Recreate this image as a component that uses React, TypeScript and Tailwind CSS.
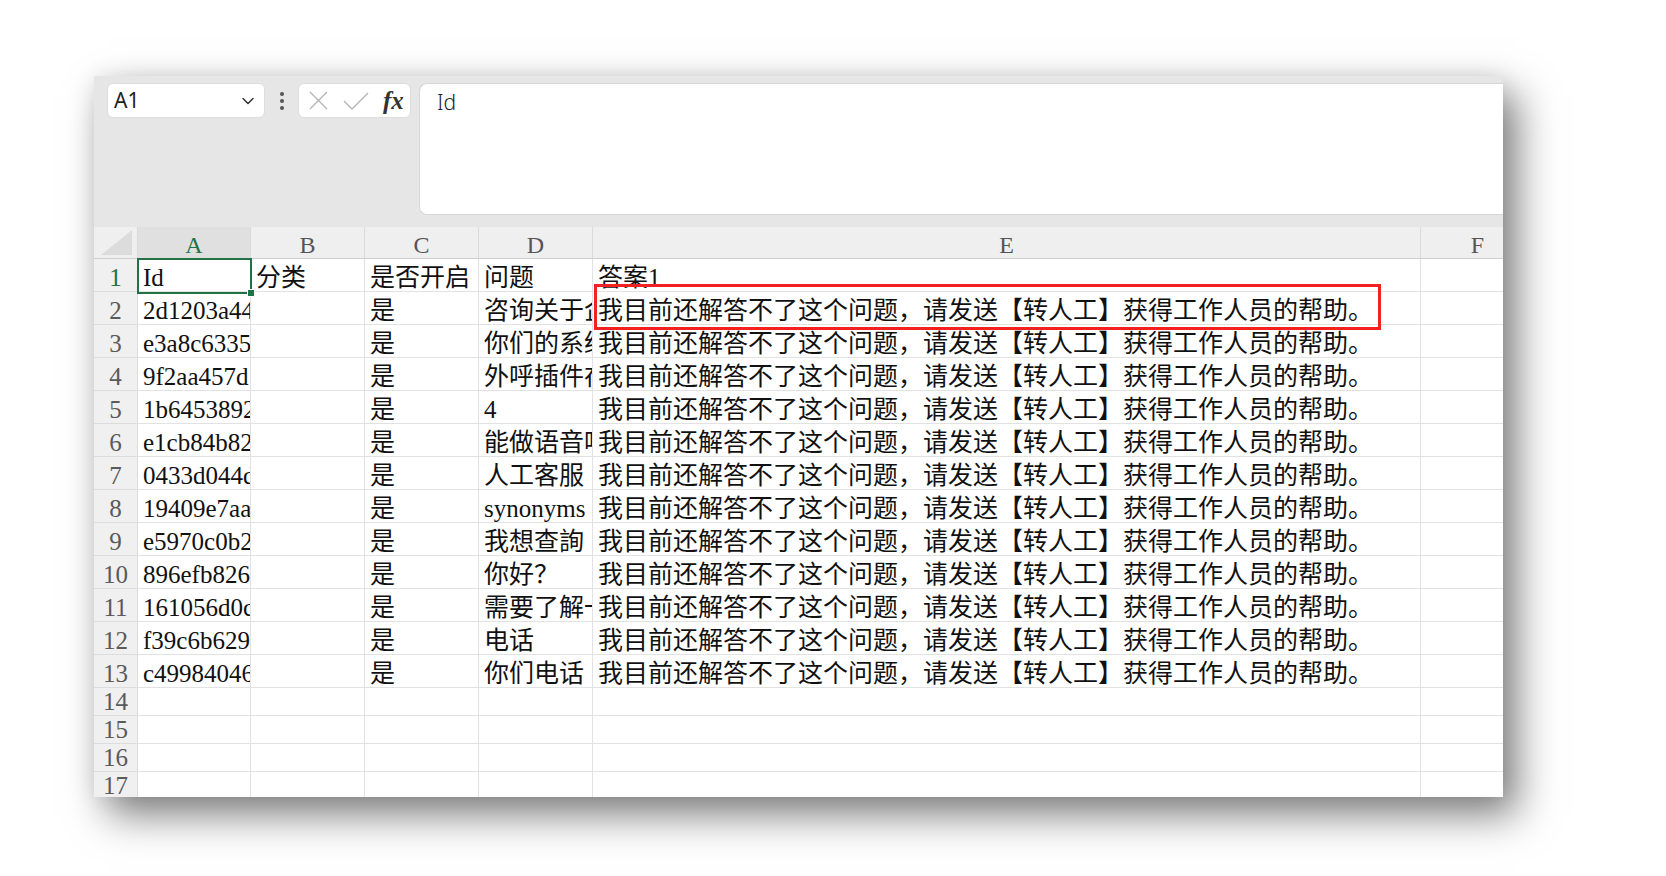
import { ChevronDown } from "lucide-react";

const ids = [
  "2d1203a44f",
  "e3a8c63357",
  "9f2aa457d1",
  "1b64538924",
  "e1cb84b82a",
  "0433d044d9",
  "19409e7aa5",
  "e5970c0b2c",
  "896efb8266",
  "161056d0c3",
  "f39c6b6295",
  "c49984046b",
];

const questions = [
  "咨询关于企业",
  "你们的系统",
  "外呼插件在",
  "4",
  "能做语音吗",
  "人工客服",
  "synonyms",
  "我想查詢",
  "你好？",
  "需要了解一",
  "电话",
  "你们电话",
];

const answer = "我目前还解答不了这个问题，请发送【转人工】获得工作人员的帮助。";

const letters = ["A", "B", "C", "D", "E", "F"];

const cellFont = "font-['Liberation_Serif','Noto_Sans_CJK_SC',serif]";

function Cell({ text }: { text?: string }) {
  return (
    <div
      className={`relative flex items-end overflow-hidden whitespace-nowrap border-r border-b border-[#e2e2e2] pl-[5px] pb-[1px] text-[25px] leading-[24px] text-[#111] ${cellFont}`}
    >
      {text}
    </div>
  );
}

function RowHeader({ n, active }: { n: number; active?: boolean }) {
  return (
    <div
      className={`flex items-end justify-center border-r border-b border-[#dcdcdc] bg-[#f0f0f0] pb-[1px] text-[25px] leading-[24px] ${cellFont} ${
        active ? "text-[#217346]" : "text-[#5a5a5a]"
      }`}
    >
      {n}
    </div>
  );
}

const gridCols = "grid w-max grid-cols-[44px_113px_114px_114px_114px_828px_114px]";

export default function App() {
  const rows = [
    ["Id", "分类", "是否开启", "问题", "答案1", ""],
    ...ids.map((id, i) => [id, "", "是", questions[i], answer, ""]),
  ];

  return (
    <div className="min-h-[876px] bg-white pt-[76px] pl-[94px]">
      <div className="relative h-[721px] w-[1409px] overflow-hidden bg-white shadow-[14px_18px_38px_rgba(0,0,0,0.5),0_0_22px_rgba(0,0,0,0.08)]">
        {/* formula bar */}
        <div className="flex h-[151px] items-start bg-[#e6e6e6] pt-[7px] pl-[13px]">
          <div className="flex h-[35px] w-[158px] items-center justify-between rounded-[6px] border border-[#dddddd] bg-white pl-[6px] pr-[6px] font-['Noto_Sans',sans-serif] text-[21px] text-[#222]">
            <span>A1</span>
            <ChevronDown className="h-5 w-5 text-[#333]" strokeWidth={1.8} />
          </div>
          <div className="flex h-[35px] w-[33px] flex-col items-center justify-center gap-[3px]">
            <span className="h-[4px] w-[4px] rounded-full bg-[#555]" />
            <span className="h-[4px] w-[4px] rounded-full bg-[#555]" />
            <span className="h-[4px] w-[4px] rounded-full bg-[#555]" />
          </div>
          <div className="flex h-[35px] w-[113px] items-center rounded-[6px] border border-[#dddddd] bg-white pl-[9px]">
            <svg width="21" height="21" viewBox="0 0 21 21" className="text-[#b4b4b4]">
              <path d="M2 2 L19 19 M19 2 L2 19" stroke="currentColor" strokeWidth="1.3" fill="none" />
            </svg>
            <svg width="26" height="20" viewBox="0 0 26 20" className="ml-[14px] text-[#b4b4b4]">
              <path d="M1 10 L9 18 L25 2" stroke="currentColor" strokeWidth="1.3" fill="none" />
            </svg>
            <span className="ml-[14px] font-['Liberation_Serif',serif] text-[25px] font-bold italic leading-none text-[#333]">
              fx
            </span>
          </div>
          <div className="ml-[8px] h-[132px] flex-1 rounded-l-[8px] border border-r-0 border-[#d6d6d6] bg-white pl-[17px] pt-[3px] font-['Noto_Sans',sans-serif] text-[21px] font-light text-[#222]">
            Id
          </div>
        </div>

        {/* sheet */}
        <div className="relative">
          <div className={`${gridCols} h-[32px] border-b border-[#cfcfcf] bg-[#efefef]`}>
            <div className="relative border-r border-[#dadada]">
              <svg width="44" height="31" viewBox="0 0 44 31" className="absolute inset-0">
                <path d="M7 28 L38 3 L38 28 Z" fill="#dcdcdc" />
              </svg>
            </div>
            {letters.map((l, i) => (
              <div
                key={l}
                className={`flex items-end justify-center border-r border-[#dadada] pb-[1px] text-[24px] leading-[24px] ${cellFont} ${
                  i === 0 ? "bg-[#e0e0e0] text-[#217346]" : "text-[#555]"
                }`}
              >
                {l}
              </div>
            ))}
          </div>

          {rows.map((r, ri) => (
            <div key={ri} className={`${gridCols} h-[33px]`}>
              <RowHeader n={ri + 1} active={ri === 0} />
              {r.map((c, ci) => (
                <Cell key={ci} text={c} />
              ))}
            </div>
          ))}

          {[14, 15, 16, 17].map((n) => (
            <div key={n} className={`${gridCols} h-[28px]`}>
              <RowHeader n={n} />
              {letters.map((l) => (
                <Cell key={l} />
              ))}
            </div>
          ))}

          {/* active cell A1 */}
          <div className="pointer-events-none absolute left-[43px] top-[31px] h-[36px] w-[115px] border-2 border-[#217346]">
            <span className="absolute -right-[5px] -bottom-[5px] h-[8px] w-[8px] border border-white bg-[#217346]" />
          </div>

          {/* red highlight */}
          <div className="pointer-events-none absolute left-[500px] top-[57px] h-[46px] w-[787px] border-[3px] border-[#f52020]" />
        </div>
      </div>
    </div>
  );
}
